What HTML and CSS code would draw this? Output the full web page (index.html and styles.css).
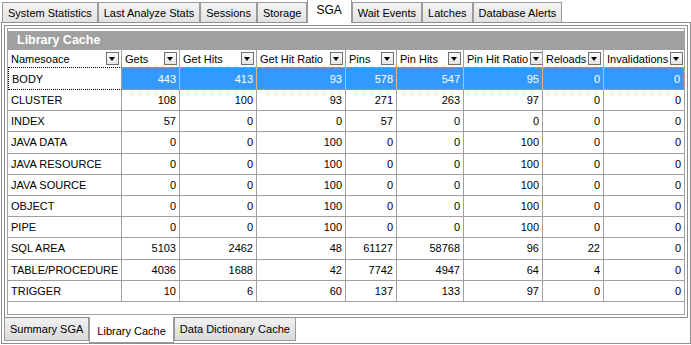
FILE: index.html
```html
<!DOCTYPE html>
<html lang="en">
<head>
    <meta charset="UTF-8">
    <title>SGA - Library Cache</title>
    <link rel="stylesheet" href="styles.css">
</head>
<body>
<div class="tabs">
    <div class="tab">System Statistics</div>
    <div class="tab">Last Analyze Stats</div>
    <div class="tab">Sessions</div>
    <div class="tab">Storage</div>
    <div class="tab active">SGA</div>
    <div class="tab">Wait Events</div>
    <div class="tab">Latches</div>
    <div class="tab">Database Alerts</div>
</div>

<div class="panel">
    <div class="frame">
        <div class="grid">
            <div class="grid-title">Library Cache</div>
            <div class="row head">
                <div class="cell">Namesoace<span class="drop"></span></div>
                <div class="cell">Gets<span class="drop"></span></div>
                <div class="cell">Get Hits<span class="drop"></span></div>
                <div class="cell">Get Hit Ratio<span class="drop"></span></div>
                <div class="cell">Pins<span class="drop"></span></div>
                <div class="cell">Pin Hits<span class="drop"></span></div>
                <div class="cell">Pin Hit Ratio<span class="drop"></span></div>
                <div class="cell">Reloads<span class="drop"></span></div>
                <div class="cell">Invalidations<span class="drop"></span></div>
            </div>
            <div id="rows"></div>
        </div>
    </div>
    <div class="subtabs">
        <div class="subtab">Summary SGA</div>
        <div class="subtab active">Library Cache</div>
        <div class="subtab">Data Dictionary Cache</div>
    </div>
</div>

<script>
    let data = [
        ["BODY", 443, 413, 93, 578, 547, 95, 0, 0],
        ["CLUSTER", 108, 100, 93, 271, 263, 97, 0, 0],
        ["INDEX", 57, 0, 0, 57, 0, 0, 0, 0],
        ["JAVA DATA", 0, 0, 100, 0, 0, 100, 0, 0],
        ["JAVA RESOURCE", 0, 0, 100, 0, 0, 100, 0, 0],
        ["JAVA SOURCE", 0, 0, 100, 0, 0, 100, 0, 0],
        ["OBJECT", 0, 0, 100, 0, 0, 100, 0, 0],
        ["PIPE", 0, 0, 100, 0, 0, 100, 0, 0],
        ["SQL AREA", 5103, 2462, 48, 61127, 58768, 96, 22, 0],
        ["TABLE/PROCEDURE", 4036, 1688, 42, 7742, 4947, 64, 4, 0],
        ["TRIGGER", 10, 6, 60, 137, 133, 97, 0, 0]
    ];

    let html = "";
    for (let i = 0; i < data.length; i++) {
        html += '<div class="row' + (i === 0 ? ' sel' : '') + '">';
        for (let j = 0; j < data[i].length; j++) {
            html += '<div class="cell' + (j === 0 ? ' name' : ' num') + '">' + data[i][j] + '</div>';
        }
        html += '</div>';
    }
    document.getElementById('rows').innerHTML = html;
</script>
</body>
</html>
```

FILE: styles.css
```css
body {
    margin: 0;
    background-color: white;
    font-family: "Liberation Sans", Arial, sans-serif;
    font-size: 11px;
    color: black;
}

.tabs {
    display: flex;
    align-items: flex-end;
    height: 22px;
    padding-left: 2px;
}

.tab {
    height: 19px;
    line-height: 20px;
    padding: 0 5px;
    border: 1px solid #9a9a9a;
    border-bottom: none;
    background: linear-gradient(#f4f4f4, #e2e2e2);
    text-align: center;
    white-space: nowrap;
}

.tab.active {
    height: 23px;
    line-height: 21px;
    padding: 0 9px 0 8px;
    margin-bottom: -1px;
    background: white;
    position: relative;
    font-size: 12px;
}

.panel {
    box-sizing: border-box;
    width: 690px;
    height: 322px;
    margin-left: 1px;
    border: 1px solid #8f8f8f;
    padding: 2px 2px 0 2px;
}

.frame {
    border: 1px solid #8f8f8f;
    padding: 2px;
    height: 287px;
}

.grid {
    box-sizing: border-box;
    height: 287px;
    border: 1px solid #a0a0a0;
    padding-top: 2px;
    overflow: hidden;
}

.grid-title {
    height: 19px;
    line-height: 19px;
    background-color: #a0a0a0;
    color: white;
    font-weight: bold;
    font-size: 12.5px;
    padding-left: 9px;
}

.row {
    display: grid;
    grid-template-columns: 114px 58px 77px 89px 51px 67px 79px 61px 80px;
    height: 21.2px;
}

.cell {
    box-sizing: border-box;
    border-right: 1px solid #a0a0a0;
    border-bottom: 1px solid #a0a0a0;
    padding: 0 3px;
    display: flex;
    align-items: center;
    white-space: nowrap;
    overflow: hidden;
}

.cell:last-child {
    border-right: none;
}

.num {
    justify-content: flex-end;
}

.head {
    height: 17px;
}

.head .cell {
    justify-content: space-between;
    border-bottom: none;
    padding: 0 2px 0 3px;
}

.drop {
    flex: none;
    position: relative;
    width: 11px;
    height: 11px;
    margin-left: 2px;
    border: 1px solid #6f6f6f;
    background: linear-gradient(#fbfbfb, #e4e4e4);
}

.drop::after {
    content: "";
    position: absolute;
    left: 2px;
    top: 4px;
    border-left: 3.5px solid transparent;
    border-right: 3.5px solid transparent;
    border-top: 4px solid black;
}

.row.sel {
    height: 23px;
}

.sel .cell {
    background-color: #3399ff;
    color: white;
    border-top: 1px dotted #d39a62;
    border-bottom: 1px dotted #d39a62;
    border-right-color: #dcb48c;
}

.sel .cell:last-child {
    border-right: 1px dotted #d39a62;
}

.sel .cell.name {
    background-color: white;
    color: black;
    border: 1px dotted black;
    border-right-color: #a0a0a0;
    border-right-style: solid;
}

.subtabs {
    display: flex;
    align-items: flex-start;
}

.subtab {
    height: 22px;
    line-height: 23px;
    padding: 0 5px;
    border: 1px solid #9a9a9a;
    border-top: none;
    background: linear-gradient(#f2f2f2, #d9d9d9);
    white-space: nowrap;
}

.subtab.active {
    height: 25px;
    line-height: 29px;
    margin-top: -1px;
    padding: 0 7px;
    background: white;
}
```
